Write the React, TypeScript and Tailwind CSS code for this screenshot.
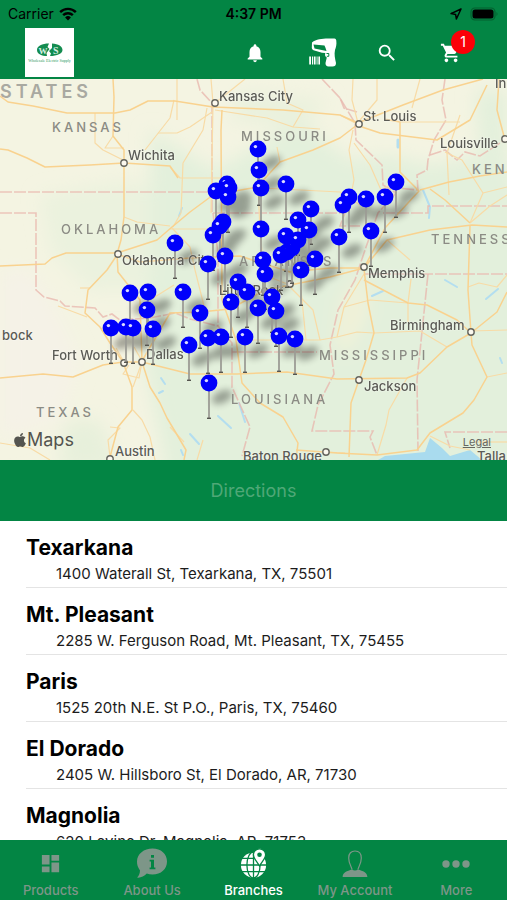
import type { ReactNode } from 'react';
import { MdDashboard, MdNotifications, MdSearch, MdShoppingCart } from 'react-icons/md';
import { FaApple } from 'react-icons/fa';

interface Branch {
  name: string;
  address: string;
}

interface MapLabel {
  text: string;
  x: number;
  y: number;
}

const branches: Branch[] = [
  { name: 'Texarkana', address: '1400 Waterall St, Texarkana, TX, 75501' },
  { name: 'Mt. Pleasant', address: '2285 W. Ferguson Road, Mt. Pleasant, TX, 75455' },
  { name: 'Paris', address: '1525 20th N.E. St P.O., Paris, TX, 75460' },
  { name: 'El Dorado', address: '2405 W. Hillsboro St, El Dorado, AR, 71730' },
  { name: 'Magnolia', address: '620 Levine Dr, Magnolia, AR, 71753' },
];

// map viewport, all coordinates below are inside of it
const VIEW = { top: 79, width: 507, height: 381 };

const pins: [number, number][] = [
  [258, 149], [259, 170], [396, 182], [227, 184], [286, 184], [229, 188], [261, 188], [216, 191],
  [228, 197], [349, 197], [385, 197], [366, 199], [343, 205], [311, 209], [298, 220], [223, 222],
  [220, 226], [261, 229], [309, 230], [371, 231], [213, 235], [286, 236], [339, 237], [298, 240],
  [175, 243], [292, 248], [287, 252], [281, 255], [225, 256], [315, 259], [263, 260], [208, 264],
  [301, 270], [265, 274], [238, 282], [148, 292], [183, 292], [247, 292], [130, 293], [272, 297],
  [231, 302], [258, 308], [147, 310], [276, 311], [200, 313], [126, 327], [111, 328], [133, 328],
  [153, 329], [279, 336], [221, 337], [245, 337], [208, 338], [295, 339], [189, 345], [209, 383],
];

const states: MapLabel[] = [
  { text: 'KANSAS', x: 52, y: 128 },
  { text: 'MISSOURI', x: 241, y: 137 },
  { text: 'KEN', x: 472, y: 170 },
  { text: 'OKLAHOMA', x: 61, y: 230 },
  { text: 'ARKANSAS', x: 239, y: 262 },
  { text: 'TENNESS', x: 431, y: 240 },
  { text: 'MISSISSIPPI', x: 319, y: 356 },
  { text: 'LOUISIANA', x: 231, y: 400 },
  { text: 'TEXAS', x: 36, y: 413 },
];

const cities: MapLabel[] = [
  { text: 'Kansas City', x: 219, y: 97 },
  { text: 'St. Louis', x: 363, y: 117 },
  { text: 'In', x: 495, y: 84 },
  { text: 'Wichita', x: 128, y: 156 },
  { text: 'Louisville', x: 440, y: 144 },
  { text: 'Oklahoma City', x: 122, y: 261 },
  { text: 'Little Rock', x: 219, y: 291 },
  { text: 'Memphis', x: 368, y: 274 },
  { text: 'Birmingham', x: 390, y: 326 },
  { text: 'bock', x: 2, y: 336 },
  { text: 'Fort Worth', x: 52, y: 356 },
  { text: 'Dallas', x: 146, y: 355 },
  { text: 'Jackson', x: 364, y: 387 },
  { text: 'Austin', x: 115, y: 452 },
  { text: 'Baton Rouge', x: 243, y: 457 },
  { text: 'Talla', x: 477, y: 457 },
];

const cityDots: [number, number][] = [
  [215, 103], [359, 124], [124, 163], [505, 139], [118, 254], [290, 284], [364, 267],
  [471, 332], [124, 363], [142, 362], [359, 380], [110, 459], [326, 452],
];

const majorRoads = [
  'M0 96 L8 102 L33 106 L67 113 L115 113 L130 110 L148 101 L175 101 L213 107 L283 110 L340 115 L358 123',
  'M113 79 L114 97 L113 136 L124 150 V217 L121 240 L117 254 L118 272 L140 300 L142 361',
  'M0 149 L8 150 L27 158 L45 167 L90 165 L124 163 L170 166 L178 178',
  'M0 266 L45 264 L52 258 L66 253 H117 L157 240 L172 227 L190 212 L213 195 L257 187 L280 162 L313 150 L340 138 L357 125',
  'M117 255 L107 270 L88 290 L85 313 L100 327 L110 343 L123 362',
  'M117 254 L140 262 L190 258 L240 256 L290 272 L330 268 L364 268 L387 240 L430 230 L472 225 L507 227',
  'M0 378 L43 374 L73 377 L103 365 L123 362 L142 362 L190 374 L237 374 L287 372 L337 379 L407 378 L420 373 L447 347 L471 333',
  'M124 365 L132 387 V410 L118 427 L110 457',
  'M142 361 L170 313 L200 312 L230 309 L265 290 L290 285 L330 277 L364 268',
  'M222 110 L221 130 L222 300 L236 340 L242 383 L260 403 L283 417 L298 443 L296 460',
  'M143 365 L150 387 L160 403 L167 418 L176 433 L186 450 L184 460',
  'M364 269 L368 303 L374 333 L366 360 L359 380 L351 403 L349 457',
  'M364 268 L385 228 L419 191 L400 172 L400 122 L384 119',
  'M360 122 L403 105 L443 90 L483 79',
  'M362 127 L380 133 L437 140 L470 120 L487 85',
  'M420 190 L449 182 L480 176 L507 172',
  'M470 223 L445 200 L430 189',
  'M470 226 L468 290 L471 333 L472 345 L487 377 L474 400 L463 413 L430 433 L417 450 L377 455 L337 453 L296 450',
  'M505 140 L497 110 L499 79',
  'M364 280 L408 303 L427 305 L457 320 L471 333 L497 312 L507 292',
];

const minorRoads = [
  'M113 136 L105 148 H124', 'M95 113 V143 L103 150 L123 160', 'M145 150 L170 118 L174 100', 'M158 133 H177 L190 127 L212 112',
  'M177 79 V120', 'M207 108 L203 130 L183 163 L181 213 L173 227', 'M211 79 L213 103 L211 213', 'M215 103 L245 79',
  'M170 167 L180 178 H223', 'M215 110 L267 118 L293 127 L320 129', 'M283 79 L287 103 L303 110 L293 127',
  'M277 147 L280 162', 'M261 188 L340 192 L360 205', 'M258 187 L260 230 L264 275 L290 285', 'M172 228 L190 247 L195 270 L205 310',
  'M124 217 L137 222 L170 226', 'M170 229 H213', 'M353 79 L352 100 L358 123', 'M377 79 V100 L360 120', 'M340 115 L357 124',
  'M353 130 L349 150 L354 180 L350 200', 'M354 143 L370 165 L381 190 L396 182', 'M400 122 H460', 'M420 79 L412 108',
  'M460 115 L447 153 L449 195', 'M445 152 L462 160 L483 193 L470 223', 'M483 193 L507 187', 'M470 223 L490 206 L507 195',
  'M387 240 L410 260', 'M58 306 L87 317', 'M80 288 H90', 'M0 443 L30 448 L50 460', 'M110 427 L120 428 L108 440 L110 457',
  'M133 410 L142 420 L150 437 L155 460', 'M142 362 L133 387', 'M170 427 L184 442', 'M203 440 L197 460',
  'M290 287 L313 310 L320 340 H245', 'M320 340 L337 337 L357 332 L374 333 L420 331 L447 347', 'M344 307 L370 300 L408 303 V322',
  'M301 290 L306 340', 'M411 279 L408 303', 'M337 337 L344 307 L364 274', 'M407 378 L389 410 L386 425 L377 455', 'M487 377 L507 373',
  'M471 331 L507 330', 'M468 287 L479 283 L497 287 L507 275', 'M430 436 L450 446 L470 450', 'M475 442 H507', 'M129 365 L123 374 L139 378 L142 362',
  'M116 348 L124 362', 'M142 361 L134 347', 'M150 300 L174 285', 'M326 452 L345 453',
];

const borders = [
  'M0 192 H213', 'M0 213 H36 V290 L44 297 L60 301 L65 306 L95 308 L103 317 L112 314 L120 320 L150 318 L175 313 L190 319 L218 326',
  'M197 79 L200 90 L212 103 V213', 'M213 213 L218 254 V326 L232 343 V387 L250 427 L242 456', 'M213 213 H345 L340 226 H360',
  'M232 352 H317', 'M322 79 L340 98 L355 123 L356 140 L382 165 L383 185 L396 193 L378 213 L365 250 L355 280 L338 310 L330 345 L334 374 L318 405 L312 431 H373 L370 437 L377 455',
  'M383 213 H428 V206 H507', 'M445 79 L442 100 L446 120 L434 140 L428 160 L427 170 L417 175 L418 190 L396 188',
  'M430 155 L445 150 L457 160 L465 152 L480 156 L503 141', 'M365 274 H507', 'M428 274 L417 380 L418 451', 'M507 432 H445 L450 448',
  'M340 98 L344 108 L357 112',
];

function toPercent(x: number, y: number) {
  return {
    left: `${(x / VIEW.width) * 100}%`,
    top: `${((y - VIEW.top) / VIEW.height) * 100}%`,
  };
}

function StatusBar() {
  return (
    <div className="grid h-7 grid-cols-3 items-center px-2 text-sm text-black">
      <div className="flex items-center gap-1">
        <span>Carrier</span>
        <svg viewBox="0 0 20 15" className="h-[14px] w-5" fill="none" stroke="currentColor" strokeWidth="2.6">
          <path d="M1.6 5.4 A12 12 0 0 1 18.4 5.4" />
          <path d="M4.8 8.8 A7.5 7.5 0 0 1 15.2 8.8" />
          <path d="M10 14.4 L6.9 11.2 A4.4 4.4 0 0 1 13.1 11.2 Z" fill="currentColor" stroke="none" />
        </svg>
      </div>
      <span className="text-center font-semibold">4:37 PM</span>
      <div className="flex items-center justify-end gap-2">
        <svg viewBox="0 0 12 12" className="h-3 w-3" fill="none" stroke="currentColor" strokeWidth="1.5" strokeLinejoin="round">
          <path d="M11 1 L1 5.6 L5.6 6.4 L6.4 11 Z" />
        </svg>
        <svg viewBox="0 0 29 14" className="h-[14px] w-[29px]">
          <rect x="1" y="1" width="24" height="12" rx="4" fill="none" stroke="#04602f" strokeWidth="1.2" />
          <rect x="2.5" y="2.5" width="21" height="9" rx="2.5" fill="#000" />
          <path d="M26.5 5 Q28.5 7 26.5 9 Z" fill="#04602f" />
        </svg>
      </div>
    </div>
  );
}

function Logo() {
  return (
    <div className="flex h-[49px] w-[49px] items-center justify-center bg-white">
      <svg viewBox="0 0 49 49" className="h-full w-full" role="img" aria-label="WS">
        <path d="M24 15.5 C17 15.5 12 18 12 22 S17 28 22 28 L21.5 25 L24.5 21 L22.5 19 Z" fill="#148c50" />
        <path d="M27 15.6 C33.5 16 37.5 18.5 37.5 22 S32 28 25 28 L26 25.5 L24 23 L27 20 Z" fill="#148c50" />
        <text x="13.5" y="25.5" fontSize="9" fontWeight="700" fontFamily="Liberation Serif, serif" fill="#d7eee1">W</text>
        <text x="28" y="26" fontSize="10" fontWeight="700" fontFamily="Liberation Serif, serif" fill="#d7eee1">S</text>
        <text x="24.5" y="34" fontSize="4" textAnchor="middle" fontFamily="Liberation Serif, serif" fill="#2b9a61">Wholesale Electric Supply</text>
      </svg>
    </div>
  );
}

function ScannerIcon() {
  return (
    <svg viewBox="0 0 28 29" className="h-[29px] w-7" fill="currentColor">
      <path d="M3 4.5 C7 1.5 13 .6 19 .6 H25.5 Q27 .6 27.3 2.5 C27.8 7 27 9 26 12 C25 16 26 21 27 25 Q27 28.6 23.5 28.6 H19.5 Q16.4 28.4 16.5 25 L17.8 19.5 Q15.3 18 16.3 15 L13 14.8 L4.5 12.3 Q2.8 11.6 2.8 10 Z" />
      <path d="M4.5 6.6 L15.5 7.4 Q17 10.5 17.5 13 L5.5 10.5 Z" fill="#038544" />
      <path d="M17.5 15.5 h2.3 v2.8 h-2" fill="none" stroke="#038544" strokeWidth="1" />
      <path d="M.2 18.5h1.8v8H.2zM3 18.5h1v8H3zM4.8 18.5h1.8v8H4.8zM7.6 18.5h.9v8h-.9zM9.4 18.5h1.6v8H9.4z" />
    </svg>
  );
}

function Header() {
  return (
    <header className="shrink-0 bg-[#038544] pb-[2px]">
      <StatusBar />
      <div className="flex items-center pr-6 pl-[25px] text-white">
        <Logo />
        <button type="button" aria-label="Notifications" className="ml-auto flex w-18 justify-center">
          <MdNotifications className="h-[22px] w-[22px]" />
        </button>
        <button type="button" aria-label="Scan" className="flex w-16 justify-center">
          <ScannerIcon />
        </button>
        <button type="button" aria-label="Search" className="flex w-16 justify-center">
          <MdSearch className="h-[22px] w-[22px]" />
        </button>
        <button type="button" aria-label="Cart" className="relative flex w-16 justify-center">
          <MdShoppingCart className="h-[22px] w-[22px]" />
          <span className="absolute -top-3 right-2 flex h-6 w-6 items-center justify-center rounded-full bg-[#fb0007] text-sm">
            1
          </span>
        </button>
      </div>
    </header>
  );
}

function MapTerrain() {
  return (
    <svg viewBox={`0 ${VIEW.top} ${VIEW.width} ${VIEW.height}`} className="h-full w-full" fill="none">
      <defs>
        <filter id="land" x="-20%" y="-20%" width="140%" height="140%">
          <feGaussianBlur stdDeviation="9" />
        </filter>
        <filter id="shade" x="-50%" y="-50%" width="200%" height="200%">
          <feGaussianBlur stdDeviation="3.5" />
        </filter>
      </defs>
      <rect y={VIEW.top} width={VIEW.width} height={VIEW.height} fill="#f4f4e2" />
      <g filter="url(#land)">
        <path d="M40 195 L125 180 L160 190 L150 290 L90 290 L50 250 Z" fill="#ebf2de" />
        <path d="M150 130 L215 170 L250 150 L300 120 L350 160 L390 155 L430 165 L507 150 L540 300 V490 H170 L140 340 L150 270 Z" fill="#e3f0dc" />
        <path d="M475 90 L507 90 V150 L480 160 Z" fill="#e3f0dc" />
        <path d="M65 420 L100 420 L120 470 L60 470 Z" fill="#e7f0db" />
        <path d="M240 90 L330 100 L300 130 L230 120 Z" fill="#eaf1dd" />
        <path d="M0 270 L30 270 L50 300 L80 360 L60 420 L0 440 Z" fill="#f5f2e7" />
        <path d="M342 300 L362 270 L368 310 L350 350 L336 350 Z" fill="#f2f2d8" />
      </g>
      <path d="M378 460 L385 456 L425 452 L430 438 L442 448 L450 456 L470 450 L482 460 Z" fill="#a9dbee" />
      <g stroke="#b3def0" strokeWidth="2" strokeLinecap="round">
        <path d="M423 190 L430 207 L429 218" />
        <path d="M398 140 V147" strokeWidth="3" />
        <path d="M182 208 L179 216" />
        <path d="M445 280 L457 287 M498 289 L486 299 M383 291 L372 296 M500 358 L502 363" />
        <path d="M161 378 L165 384 M159 393 L163 391 M218 416 L231 428 M190 434 L199 444 M239 403 L245 422 M181 450 L183 455" />
      </g>
      {borders.map((d) => (
        <path key={d} d={d} stroke="#e8b6ac" strokeWidth="1.6" strokeDasharray="12 2" opacity="0.75" />
      ))}
      <g stroke="#f8dba6" strokeWidth="1.2" strokeLinejoin="round">
        {minorRoads.map((d) => (
          <path key={d} d={d} />
        ))}
      </g>
      <g stroke="#f9d28f" strokeWidth="1.5" strokeLinejoin="round">
        {majorRoads.map((d) => (
          <path key={d} d={d} />
        ))}
      </g>
      <g fill="#fbf8ee" stroke="#66665f" strokeWidth="1.4">
        {cityDots.map(([x, y]) => (
          <circle key={`${x}-${y}`} cx={x} cy={y} r="3.2" />
        ))}
      </g>
      <g filter="url(#shade)" fill="#000" opacity="0.34">
        {pins.map(([x, y]) => (
          <ellipse key={`${x}-${y}`} cx={x + 13} cy={y + 14} rx="11" ry="6" transform={`rotate(-25 ${x + 13} ${y + 14})`} />
        ))}
      </g>
    </svg>
  );
}

function Pin({ x, y }: { x: number; y: number }) {
  return (
    <button type="button" aria-label="Branch" className="absolute -mt-[9px] -ml-[9px] h-[46px] w-[18px]" style={toPercent(x, y)}>
      <svg viewBox="0 0 18 46" className="h-full w-full">
        <path d="M9 16 V44" stroke="#9c9c95" strokeWidth="1.8" />
        <path d="M7 44.3 H11" stroke="#55554f" strokeWidth="1.4" />
        <circle cx="9" cy="9" r="8.4" fill="#0000fb" />
        <circle cx="6.4" cy="6.6" r="1.7" fill="#dcdcff" />
      </svg>
    </button>
  );
}

function BranchMap() {
  return (
    <section aria-label="Branch map" className="relative aspect-[507/381] w-full shrink-0 overflow-hidden">
      <MapTerrain />
      <span
        className="absolute -translate-y-1/2 text-lg font-semibold tracking-[4px] whitespace-nowrap text-[#a9a9a1]"
        style={toPercent(0, 92)}
      >
        STATES
      </span>
      {states.map((s) => (
        <span
          key={s.text}
          className="absolute -translate-y-1/2 text-[13px] font-medium tracking-[3px] whitespace-nowrap text-[#8b8b84]"
          style={toPercent(s.x, s.y)}
        >
          {s.text}
        </span>
      ))}
      {cities.map((c) => (
        <span
          key={c.text}
          className="absolute -translate-y-1/2 text-[13px] font-medium whitespace-nowrap text-[#5b5b55] [text-shadow:0_0_2px_#fff]"
          style={toPercent(c.x, c.y)}
        >
          {c.text}
        </span>
      ))}
      {pins.map(([x, y]) => (
        <Pin key={`${x}-${y}`} x={x} y={y} />
      ))}
      <div className="absolute bottom-2 left-[13px] flex items-center text-[#54544f]">
        <FaApple className="h-4 w-[14px]" />
        <span className="text-lg leading-6">Maps</span>
      </div>
      <a href="#legal" className="absolute right-4 bottom-3 text-[11px] leading-3 text-[#66665f] underline">
        Legal
      </a>
    </section>
  );
}

function BranchList() {
  return (
    <ul className="min-h-0 flex-1 overflow-hidden bg-white">
      {branches.map((branch) => (
        <li key={branch.name} className="ml-[26px] h-[67px] border-b border-[#e4e4e4] pt-[13px] whitespace-nowrap text-black">
          <h2 className="text-[21px] leading-7 font-bold">{branch.name}</h2>
          <p className="pl-[30px] text-[15px] leading-6 text-[#1c1c1c]">{branch.address}</p>
        </li>
      ))}
    </ul>
  );
}

function InfoIcon() {
  return (
    <svg viewBox="0 0 32 31" className="h-[31px] w-8" fill="currentColor">
      <path d="M16.5 .6 C25 .6 31 6 31 13.6 S25 26.6 16.5 26.6 C14.3 26.6 12.4 26.3 10.8 25.6 C8 28.6 4.6 30 1 29.6 C3 27.8 3.8 25.4 4 22.4 A13.5 13.5 0 0 1 1 13.6 C1 6 8 .6 16.5 .6 Z" />
      <path d="M15 7 h3 v2.8 h-3z M13.6 11.8 h4.4 v7.8 h1.4 v1.6 h-5.8 v-1.6 h1.4 v-6.2 h-1.4z" fill="#038544" />
    </svg>
  );
}

function GlobePinIcon() {
  return (
    <svg viewBox="0 0 28 31" className="h-[31px] w-7">
      <circle cx="13.5" cy="17" r="12.6" fill="currentColor" />
      <g fill="none" stroke="#038544" strokeWidth="1.3">
        <ellipse cx="13.5" cy="17" rx="6.6" ry="13" />
        <path d="M13.5 4 V30 M0 17 H28 M2 10.4 H25 M2 23.6 H25" />
      </g>
      <path
        d="M19.5 .8 C23 .8 25.6 3.4 25.6 6.8 C25.6 10.4 22 13.4 19.5 18 C17 13.4 13.4 10.4 13.4 6.8 C13.4 3.4 16 .8 19.5 .8 Z"
        fill="currentColor"
        stroke="#038544"
        strokeWidth="1.3"
      />
      <circle cx="19.5" cy="6.8" r="2.3" fill="#038544" />
    </svg>
  );
}

function AccountIcon() {
  return (
    <svg viewBox="0 0 26 28" className="h-7 w-[26px]">
      <path
        d="M10 19.5 C10 17 6.7 14.5 6.7 8 C6.7 3.4 9.2 1 13 1 S19.3 3.4 19.3 8 C19.3 14.5 16 17 16 19.5"
        fill="none"
        stroke="currentColor"
        strokeWidth="1.2"
      />
      <path d="M.6 27 C.8 22.4 5 21 10 19.5 Q13 21.5 16 19.5 C21 21 25.2 22.4 25.4 27 Z" fill="currentColor" />
    </svg>
  );
}

function MoreIcon() {
  return (
    <svg viewBox="0 0 28 8" className="h-2 w-7" fill="currentColor">
      <circle cx="4" cy="4" r="3.7" />
      <circle cx="14" cy="4" r="3.7" />
      <circle cx="24" cy="4" r="3.7" />
    </svg>
  );
}

function Tab({ label, active, children }: { label: string; active?: boolean; children: ReactNode }) {
  return (
    <button
      type="button"
      aria-current={active ? 'page' : undefined}
      className={`flex flex-1 flex-col items-center gap-px pt-2 ${active ? 'text-white' : 'text-[#7d9688]'}`}
    >
      <span className="flex h-8 items-center">{children}</span>
      <span className="text-[13px] leading-5 font-medium">{label}</span>
    </button>
  );
}

export default function App() {
  return (
    <div className="flex h-screen flex-col overflow-hidden bg-white font-[Inter,sans-serif]">
      <Header />
      <BranchMap />
      <button type="button" disabled className="h-[61px] w-full shrink-0 bg-[#038544] text-lg text-[#4fa877]">
        Directions
      </button>
      <BranchList />
      <nav className="flex h-[60px] shrink-0 bg-[#038544]">
        <Tab label="Products">
          <MdDashboard className="h-[23px] w-[23px]" />
        </Tab>
        <Tab label="About Us">
          <InfoIcon />
        </Tab>
        <Tab label="Branches" active>
          <GlobePinIcon />
        </Tab>
        <Tab label="My Account">
          <AccountIcon />
        </Tab>
        <Tab label="More">
          <MoreIcon />
        </Tab>
      </nav>
    </div>
  );
}
